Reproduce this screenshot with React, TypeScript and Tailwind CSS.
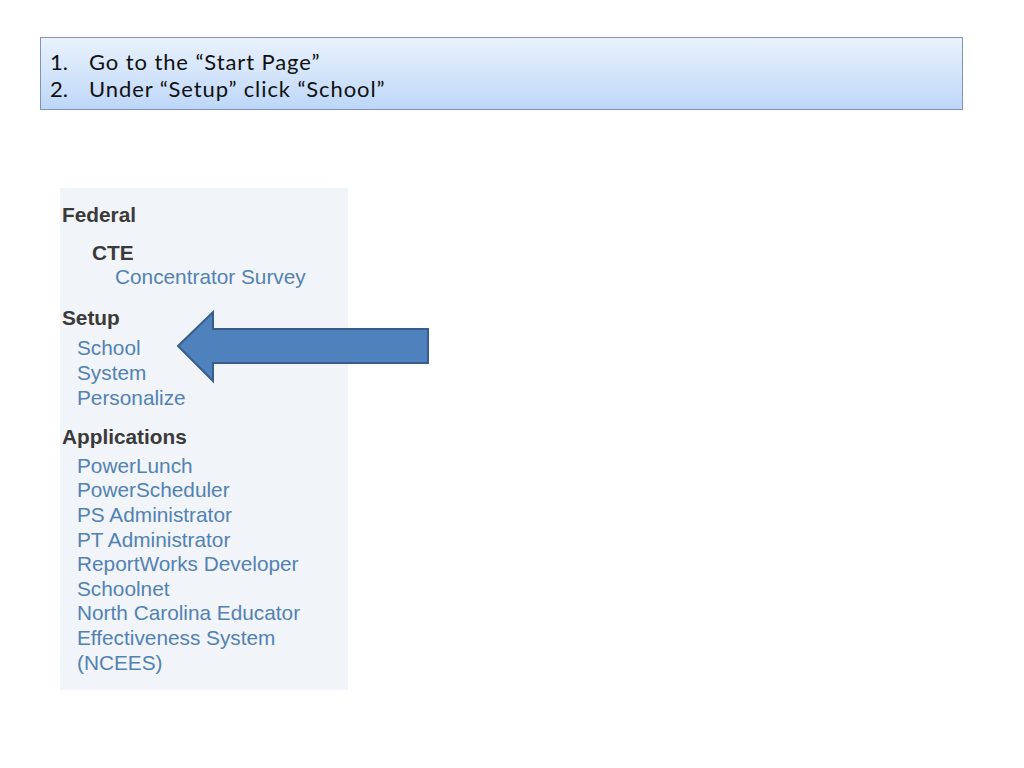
import React from "react";

const linkCls = "text-[#5282b2]";
const headCls = "font-bold text-[#3a3a3a]";

export default function App() {
  const apps = [
    "PowerLunch",
    "PowerScheduler",
    "PS Administrator",
    "PT Administrator",
    "ReportWorks Developer",
    "Schoolnet",
    "North Carolina Educator",
    "Effectiveness System",
    "(NCEES)",
  ];
  return (
    <div className="relative w-[1024px] h-[768px] bg-white overflow-hidden">
      <div className="ml-[40px] mt-[37px] w-[923px] h-[73px] border border-[#7f93b5] bg-gradient-to-b from-[#eaf2fd] to-[#bdd7f8] pl-[9px] pt-[10px] font-['Lato','Open_Sans',sans-serif] text-[22px] leading-[27px] tracking-[0.9px] text-[#111]">
        <div className="flex">
          <span className="w-[39px] tracking-normal">1.</span>
          <span>Go to the “Start Page”</span>
        </div>
        <div className="flex">
          <span className="w-[39px] tracking-normal">2.</span>
          <span>Under “Setup” click “School”</span>
        </div>
      </div>

      <div className="ml-[60px] mt-[78px] w-[288px] h-[502px] bg-[#f1f4f9] pl-[2px] pt-[15px] font-['Liberation_Sans',Arial,sans-serif] text-[20.8px] leading-[24.6px]">
        <div className={headCls}>Federal</div>
        <div className={`${headCls} mt-[13px] pl-[30px]`}>CTE</div>
        <div className={`${linkCls} pl-[53px]`}>Concentrator Survey</div>

        <div className={`${headCls} mt-[16px]`}>Setup</div>
        <div className="mt-[6px] pl-[15px] flex flex-col">
          <span className={linkCls}>School</span>
          <span className={linkCls}>System</span>
          <span className={linkCls}>Personalize</span>
        </div>

        <div className={`${headCls} mt-[15px]`}>Applications</div>
        <div className="mt-[4px] pl-[15px] flex flex-col">
          {apps.map((a) => (
            <span key={a} className={linkCls}>
              {a}
            </span>
          ))}
        </div>
      </div>

      <svg
        className="absolute left-0 top-0"
        width="1024"
        height="768"
        viewBox="0 0 1024 768"
      >
        <polygon
          points="178,346 213,312 213,329 428,329 428,363 213,363 213,381"
          fill="#4f81bd"
          stroke="#385d8a"
          strokeWidth="2"
          strokeLinejoin="miter"
        />
      </svg>
    </div>
  );
}
